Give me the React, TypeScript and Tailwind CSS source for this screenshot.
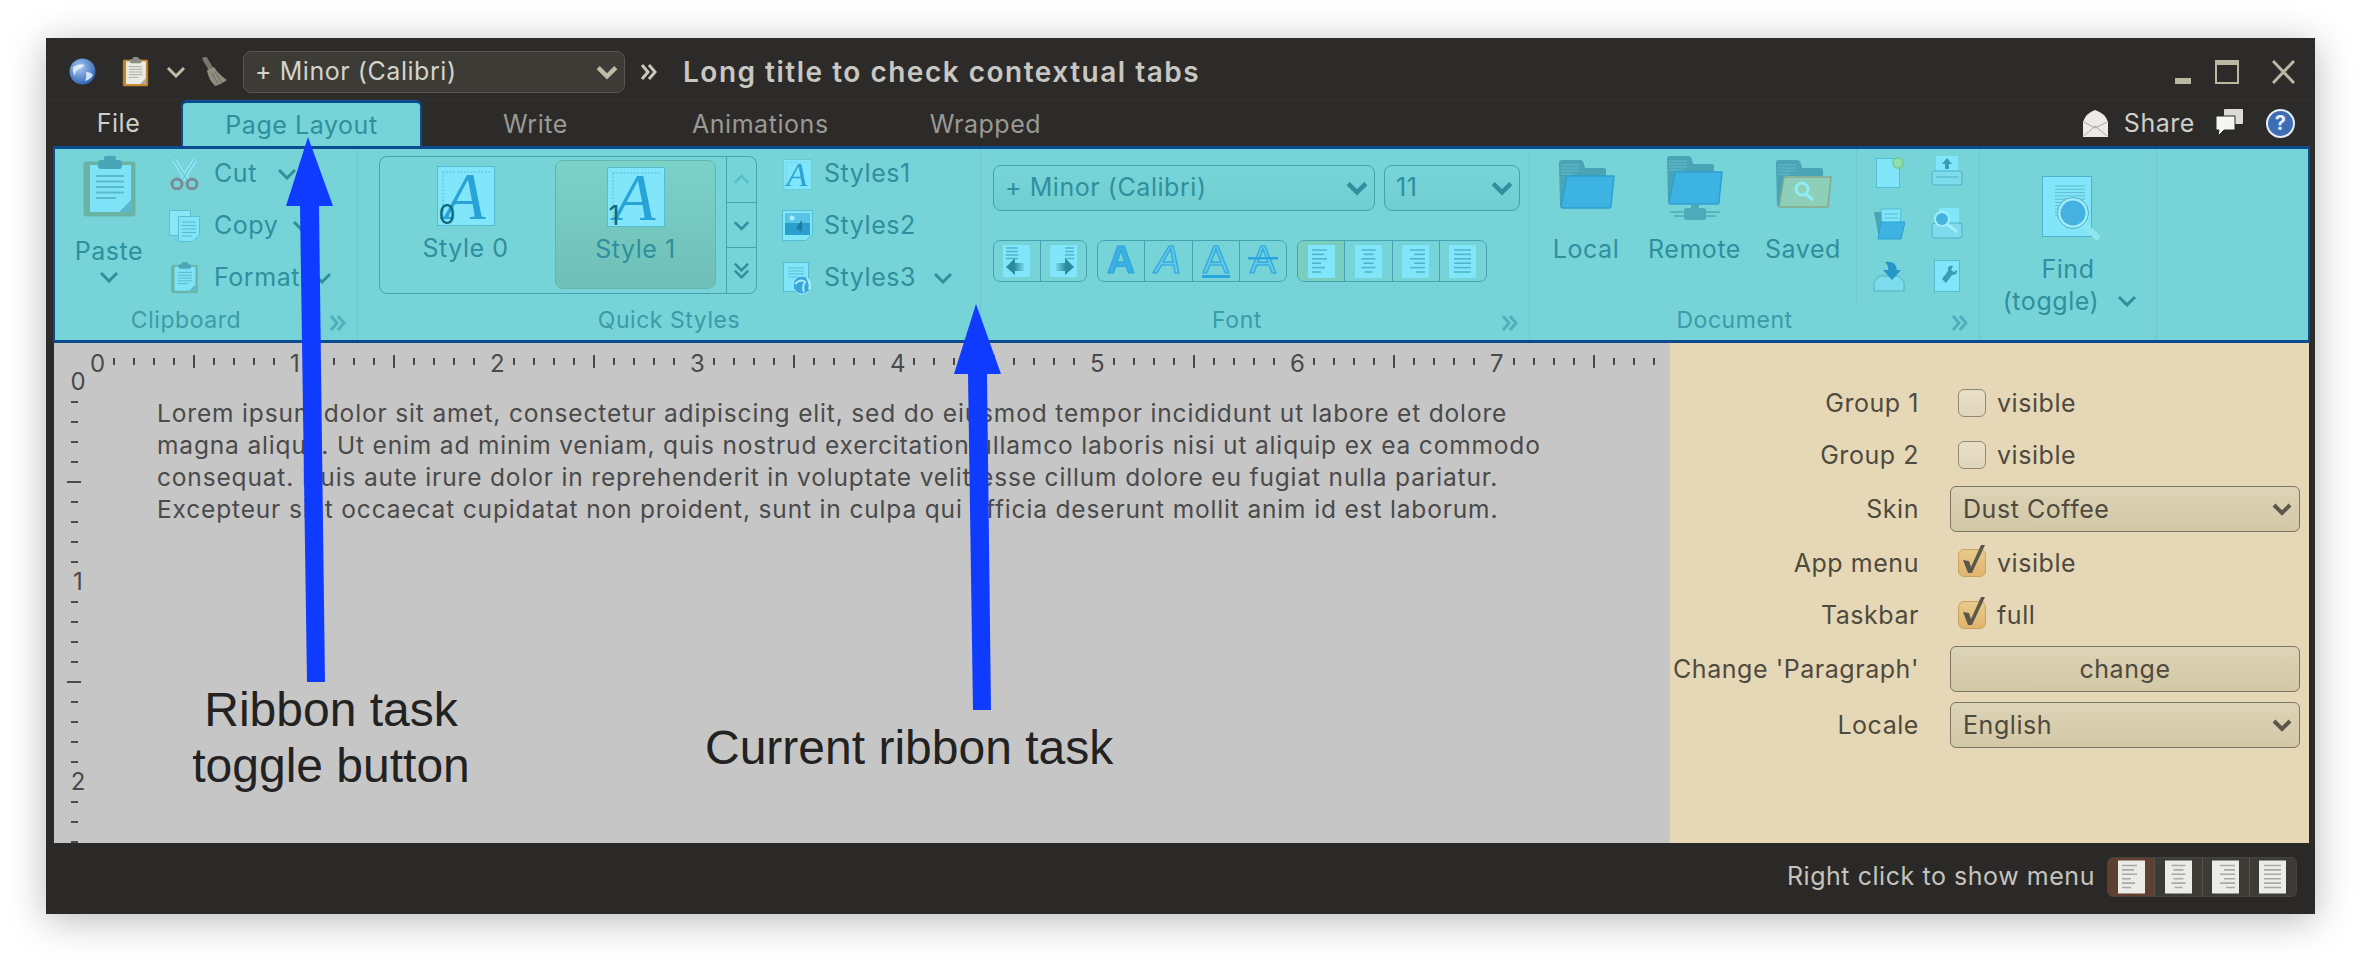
import React from 'react';

const UI = "font-['Inter','Noto_Sans',sans-serif]";
const TEAL = '#2f8f9d';

// ---- small drawings ----
function Chevron({ w = 20, h = 12, color = TEAL, sw = 3 }: { w?: number; h?: number; color?: string; sw?: number }) {
  return (
    <svg width={w} height={h} viewBox="0 0 20 12" className="shrink-0">
      <path d="M2 2 L10 10 L18 2" fill="none" stroke={color} strokeWidth={sw} />
    </svg>
  );
}

function Quote({ color = '#4fb0bb' }: { color?: string }) {
  return (
    <svg width="17" height="18" viewBox="0 0 17 18">
      <path d="M2 2 L8 9 L2 16 M9 2 L15 9 L9 16" fill="none" stroke={color} strokeWidth="3" />
    </svg>
  );
}

function PageLines({ x, y, w, rows, gap = 4, color = '#5cb9cc', sw = 1.5 }: { x: number; y: number; w: number; rows: number; gap?: number; color?: string; sw?: number }) {
  return (
    <>
      {Array.from({ length: rows }).map((_, i) => (
        <line key={i} x1={x} x2={x + w - (i === rows - 1 ? w * 0.3 : 0)} y1={y + i * gap} y2={y + i * gap} stroke={color} strokeWidth={sw} />
      ))}
    </>
  );
}

function Clipboard({ w, h, board, paper, lines, clip }: { w: number; h: number; board: string; paper: string; lines: string; clip: string }) {
  return (
    <svg width={w} height={h} viewBox="0 0 53 62" className="shrink-0">
      <rect x="1" y="6" width="51" height="54" rx="2" fill={board} stroke={board} />
      <rect x="7" y="9" width="41" height="47" fill={paper} />
      <path d="M48 44 L48 56 L36 56 Z" fill={lines} />
      <PageLines x={13} y={20} w={28} rows={5} gap={5.5} color={lines} sw={2} />
      <rect x="15" y="4" width="24" height="9" rx="3" fill={clip} />
      <rect x="21" y="0" width="12" height="6" rx="2" fill={clip} />
    </svg>
  );
}

function Scissors() {
  return (
    <svg width="29" height="31" viewBox="0 0 29 31" className="shrink-0">
      <path d="M4 1 L17 21 M25 1 L12 21" stroke="#8be6f2" strokeWidth="5" fill="none" />
      <path d="M4 1 L17 21 M25 1 L12 21" stroke="#58b7c6" strokeWidth="1" fill="none" />
      <ellipse cx="7" cy="25" rx="5" ry="5" fill="none" stroke="#7a8a96" strokeWidth="3" />
      <ellipse cx="22" cy="25" rx="5" ry="5" fill="none" stroke="#7a8a96" strokeWidth="3" />
    </svg>
  );
}

function Copy() {
  return (
    <svg width="31" height="32" viewBox="0 0 31 32" className="shrink-0">
      <rect x="0.5" y="0.5" width="21" height="25" fill="#8ae5f5" stroke="#5cc0d4" />
      <path d="M9.5 6.5 H30.5 V25 L24 31.5 H9.5 Z" fill="#80e4f8" stroke="#5cc0d4" />
      <PageLines x={13} y={12} w={14} rows={5} gap={3.5} sw={1} />
    </svg>
  );
}

function PageA({ w, h, digit }: { w: number; h: number; digit?: string }) {
  return (
    <div className="relative shrink-0" style={{ width: w, height: h }}>
      <svg width={w} height={h} viewBox="0 0 58 60">
        <rect x="0.5" y="0.5" width="57" height="59" fill="#82e6fa" stroke="#55bdd2" />
        <path d="M6 6 H54 M6 6 V56" stroke="#4cb2c6" strokeWidth="1" strokeDasharray="1.5 2" fill="none" />
        <text x="7" y="53" fontFamily="'Liberation Serif', serif" fontStyle="italic" fontSize="68" fill="#27a3d8">A</text>
      </svg>
      {digit && <span className="absolute left-[2px] bottom-[-4px] text-[27px] leading-[30px] tracking-normal text-[#0a6a7e]">{digit}</span>}
    </div>
  );
}

function Picture() {
  return (
    <svg width="31" height="32" viewBox="0 0 31 32" className="shrink-0">
      <path d="M0.5 0.5 H30.5 V24 L24 30.5 H0.5 Z" fill="#82e6fa" stroke="#55bdd2" />
      <rect x="3" y="3" width="25" height="22" fill="#2b9fcc" />
      <rect x="3" y="3" width="25" height="10" fill="#5ac4e4" />
      <circle cx="10" cy="8" r="2.5" fill="#a8f0ff" />
      <path d="M20 22 L20 10 L14 18 Z" fill="#1e7ca3" />
    </svg>
  );
}

function PageGlobe() {
  return (
    <svg width="29" height="33" viewBox="0 0 29 33" className="shrink-0">
      <rect x="0.5" y="0.5" width="25" height="29" fill="#82e6fa" stroke="#55bdd2" />
      <PageLines x={5} y={6} w={16} rows={4} gap={3} sw={1} />
      <circle cx="19" cy="23" r="9" fill="#3ba6d8" stroke="#9be9f5" />
      <path d="M12 22 Q18 16 22 20 Q19 24 21 30 M24 16 Q28 22 26 27" stroke="#a9eef8" strokeWidth="2" fill="none" />
    </svg>
  );
}

function Folder({ w = 57, h = 50, front = '#3db3e4', edge = '#2f9fd0' }: { w?: number; h?: number; front?: string; edge?: string }) {
  return (
    <svg width={w} height={h} viewBox="0 0 57 50" className="shrink-0">
      <path d="M2 46 L1 3 Q1 0 4 0 H22 Q25 0 26 4 L27 8 H46 Q48 8 48 10 V16 L10 16 L6 46 Z" fill="#49a4b5" />
      <PageLines x={3} y={5} w={18} rows={4} gap={3} color="#66bcca" sw={1} />
      <path d="M9 16 H56 L53 46 Q53 48 51 48 H5 Q3 48 3 46 Z" fill={front} stroke={edge} strokeWidth="1.5" />
    </svg>
  );
}

function RemoteFolder() {
  return (
    <div className="flex flex-col items-center">
      <Folder h={50} />
      <svg width="50" height="16" viewBox="0 0 50 16" className="-mt-[2px]">
        <path d="M0 8 H50 M4 12 H46" stroke="#4ea9b8" strokeWidth="1.5" />
        <rect x="21" y="0" width="8" height="5" fill="#4ea9b8" />
        <rect x="14" y="4" width="22" height="12" rx="2" fill="#4ea9b8" />
      </svg>
    </div>
  );
}

function SavedFolder() {
  return (
    <svg width="57" height="50" viewBox="0 0 57 50" className="shrink-0">
      <path d="M2 46 L1 3 Q1 0 4 0 H22 Q25 0 26 4 L27 8 H46 Q48 8 48 10 V16 L10 16 L6 46 Z" fill="#49a4b5" />
      <PageLines x={3} y={5} w={18} rows={4} gap={3} color="#66bcca" sw={1} />
      <path d="M9 17 H56 L53 47 H4 Z" fill="#8dcfb8" stroke="#86a98b" strokeWidth="1.5" />
      <circle cx="27" cy="29" r="6" fill="none" stroke="#8fecf4" strokeWidth="3" />
      <path d="M31 34 L38 40" stroke="#8fecf4" strokeWidth="3.5" />
    </svg>
  );
}

function FindPage() {
  return (
    <svg width="58" height="64" viewBox="0 0 58 64" className="shrink-0">
      <rect x="0.5" y="0.5" width="49" height="60" fill="#82e6fa" stroke="#4fb2c8" />
      <PageLines x={13} y={10} w={30} rows={10} gap={3.3} color="#5fbdd0" sw={1} />
      <path d="M37 44 L55 61" stroke="#8be6f2" strokeWidth="6" strokeLinecap="round" />
      <circle cx="31" cy="37" r="14" fill="#45b1e0" stroke="#a0eef8" strokeWidth="3" />
      <circle cx="31" cy="37" r="15.5" fill="none" stroke="#53b0c2" strokeWidth="1" />
    </svg>
  );
}

// page with a bar list, aligned left / center / right / justified
function AlignIcon({ kind, w = 27, h = 33, fill = '#82e6fa', line = '#4fb6cc' }: { kind: number; w?: number; h?: number; fill?: string; line?: string }) {
  const widths = [[15, 12, 15, 9, 13, 9], [14, 10, 14, 10, 14, 8], [15, 11, 15, 11, 15, 9], [17, 17, 17, 17, 17, 17]][kind];
  return (
    <svg width={w} height={h} viewBox="0 0 27 33" className="shrink-0">
      <rect x="0" y="0" width="27" height="33" fill={fill} />
      {widths.map((lw, i) => {
        const x = kind === 0 ? 4 : kind === 1 ? (27 - lw) / 2 : kind === 2 ? 23 - lw : 5;
        return <line key={i} x1={x} x2={x + lw} y1={5 + i * 4.4} y2={5 + i * 4.4} stroke={line} strokeWidth="1.6" />;
      })}
    </svg>
  );
}

function IndentIcon({ right }: { right?: boolean }) {
  const id = right ? 'fade-r' : 'fade-l';
  return (
    <svg width="27" height="32" viewBox="0 0 27 32" className="shrink-0">
      <defs>
        <linearGradient id={id} x1={right ? '1' : '0'} x2={right ? '0' : '1'} y1="0" y2="0">
          <stop offset="0.45" stopColor="#2c8a9d" />
          <stop offset="1" stopColor="#2c8a9d" stopOpacity="0.15" />
        </linearGradient>
      </defs>
      <rect x="0" y="0" width="27" height="32" fill="#82e6fa" />
      <path d={right ? 'M15 3 H24 M15 6.5 H24 M15 10 H24 M15 13.5 H24' : 'M3 3 H15 M3 6.5 H15 M3 10 H15 M3 13.5 H15'} stroke="#4fb6cc" strokeWidth="1.5" />
      <path d={right ? 'M6 18 H15 V13 L24 22 L15 30 V26 H6 Z' : 'M21 18 H12 V13 L3 22 L12 30 V26 H21 Z'} fill={`url(#${id})`} />
    </svg>
  );
}

function FontA({ kind }: { kind: number }) {
  const bold = kind === 0;
  return (
    <svg width="36" height="38" viewBox="0 0 36 38" className="shrink-0">
      <text
        x="18"
        y="31"
        textAnchor="middle"
        fontFamily="'Liberation Sans', Arial, sans-serif"
        fontSize="39"
        fontWeight={bold ? 700 : 400}
        fontStyle={kind === 1 ? 'italic' : 'normal'}
        fill={bold ? '#3bb0e2' : '#63cdea'}
        stroke="#2aa6dc"
        strokeWidth={bold ? 1 : 1.2}
      >
        A
      </text>
      {kind === 2 && <rect x="4" y="33" width="28" height="3" fill="#2aa6dc" />}
      {kind === 3 && <rect x="3" y="15" width="30" height="2.5" fill="#2aa6dc" />}
    </svg>
  );
}

function SmallDoc({ kind }: { kind: number }) {
  if (kind === 0) return (
    <svg width="32" height="32" viewBox="0 0 32 32">
      <rect x="3.5" y="2.5" width="23" height="29" fill="#82e6fa" stroke="#55bdd2" />
      <circle cx="25" cy="7" r="5" fill="#8fe0b0" stroke="#78d090" strokeWidth="2" />
    </svg>
  );
  if (kind === 1) return (
    <svg width="32" height="32" viewBox="0 0 32 32">
      <rect x="5" y="0" width="22" height="18" fill="#82e6fa" />
      <path d="M16 2 L21 8 H18 V13 H14 V8 H11 Z" fill="#3b9cb4" />
      <rect x="1" y="15" width="30" height="14" rx="3" fill="#7ddcec" stroke="#4fb0c4" />
      <line x1="5" y1="21" x2="27" y2="21" stroke="#4fb0c4" />
    </svg>
  );
  if (kind === 2) return (
    <svg width="32" height="32" viewBox="0 0 32 32">
      <path d="M1 4 H10 L13 30 H6 Z" fill="#49a4b5" />
      <path d="M8 1 H28 L27 16 H9 Z" fill="#82e6fa" stroke="#55bdd2" />
      <path d="M11 6 H25 M11 10 H25" stroke="#55bdd2" />
      <path d="M8 14 H32 L28 31 H5 Z" fill="#3db3e4" stroke="#2f9fd0" />
    </svg>
  );
  if (kind === 3) return (
    <svg width="32" height="32" viewBox="0 0 32 32">
      <rect x="8" y="0" width="20" height="18" fill="#82e6fa" />
      <rect x="1" y="15" width="30" height="15" rx="3" fill="#7ddcec" stroke="#4fb0c4" />
      <circle cx="11" cy="11" r="7" fill="#45b1e0" stroke="#a0eef8" strokeWidth="2" />
      <path d="M16 16 L26 24" stroke="#a0eef8" strokeWidth="3" />
    </svg>
  );
  if (kind === 4) return (
    <svg width="32" height="32" viewBox="0 0 32 32">
      <path d="M6 16 L1 22 V31 H31 V22 L26 16 Z" fill="#7ddcec" stroke="#4fb0c4" />
      <path d="M12 2 Q23 0 24 10 H28 L19 20 L10 10 H15 Q16 6 12 2 Z" fill="#2796c8" />
    </svg>
  );
  return (
    <svg width="32" height="32" viewBox="0 0 32 32">
      <rect x="3.5" y="0.5" width="25" height="31" fill="#82e6fa" stroke="#55bdd2" />
      <path d="M22 6 Q16 5 17 11 L11 19 L15 23 L21 15 Q27 15 26 10 L23 12 L20 10 Z" fill="#3b9cb4" />
    </svg>
  );
}

function Globe() {
  return (
    <svg width="27" height="27" viewBox="0 0 27 27" className="shrink-0">
      <defs>
        <radialGradient id="gl" cx="0.4" cy="0.35" r="0.7">
          <stop offset="0" stopColor="#a8ccf5" />
          <stop offset="1" stopColor="#2c5fb0" />
        </radialGradient>
      </defs>
      <circle cx="13.5" cy="13.5" r="13" fill="url(#gl)" />
      <path d="M4 9 Q10 5 16 7 Q13 10 10 11 Q6 13 6 18 Q3 14 4 9 Z M17 14 Q22 14 24 17 Q21 22 16 23 Q18 19 17 14 Z" fill="#eaf1fc" opacity="0.85" />
    </svg>
  );
}

function Broom() {
  return (
    <svg width="26" height="30" viewBox="0 0 26 30" className="ml-[16px] shrink-0">
      <path d="M3 2 L9 12" stroke="#77766c" strokeWidth="5" strokeLinecap="round" />
      <path d="M5 13 L12 10 Q17 18 25 23 Q18 28 13 29 Q6 22 5 13 Z" fill="#8e8d7f" />
      <path d="M10 16 L16 27 M13 15 L20 26" stroke="#6f6e62" strokeWidth="1" />
    </svg>
  );
}

// ---- ribbon pieces ----
function RibbonGroup({ width, label, more, labelClass, children }: { width: string; label?: string; more?: boolean; labelClass?: string; children: React.ReactNode }) {
  return (
    <div className={`${width} shrink-0 flex flex-col border-r border-[#6cc8cd]`}>
      <div className="h-[154px] flex">{children}</div>
      {label && (
        <div className="relative flex-1 flex items-center justify-center pb-[2px] text-[23px] text-[#3c9ba7]">
          <span className={labelClass}>{label}</span>
          {more && <span className="absolute right-[11px] top-[11px]"><Quote /></span>}
        </div>
      )}
    </div>
  );
}

function SmallItem({ icon, label, chevron, textClass = 'ml-[14px]' }: { icon: React.ReactNode; label: string; chevron?: string; textClass?: string }) {
  return (
    <div className="h-[52px] flex items-center">
      <div className="w-[32px] flex justify-center shrink-0">{icon}</div>
      <span className={`text-[25px] text-[#2f8f9d] ${textClass}`}>{label}</span>
      {chevron && <span className={chevron}><Chevron /></span>}
    </div>
  );
}

function StyleTile({ digit, active }: { digit: string; active?: boolean }) {
  return (
    <div className={`w-[161px] h-[129px] rounded-[8px] flex flex-col items-center pt-[6px] ${active ? 'bg-gradient-to-b from-[#7bd2c6] to-[#70bfb8] border border-[#63b5ad]' : ''}`}>
      <PageA w={58} h={60} digit={digit} />
      <span className="mt-[5px] text-[25px] leading-[34px] text-[#2f8f9d]">Style {digit}</span>
    </div>
  );
}

function Combo({ text, width, height = 'h-[46px]', dark }: { text: string; width: string; height?: string; dark?: boolean }) {
  return (
    <div className={`${width} ${height} shrink-0 rounded-[8px] border flex items-center justify-between pl-[11px] pr-[6px] text-[25px] ${dark ? 'border-[#57564f] bg-[#3c3b36] text-[#d4d3cb]' : 'border-[#45a3b0] bg-gradient-to-b from-[#78d5d9] to-[#6fcccf] text-[#2f8f9d]'}`}>
      <span>{text}</span>
      <Chevron w={22} h={16} color={dark ? '#bdbca4' : '#2f8f9d'} sw={4} />
    </div>
  );
}

function Strip({ children, width }: { children: React.ReactNode; width: string }) {
  return <div className={`${width} h-[42px] shrink-0 flex rounded-[7px] border border-[#45a3b0] overflow-hidden divide-x divide-[#45a3b0]`}>{children}</div>;
}

function StripCell({ children, active }: { children: React.ReactNode; active?: boolean }) {
  return <div className={`flex-1 flex items-center justify-center overflow-hidden ${active ? 'bg-[#78cfc0]' : ''}`}>{children}</div>;
}

function Ribbon() {
  const doc = [0, 1, 2, 3, 4, 5];
  return (
    <div className="ml-[7px] mr-[5px] h-[197px] border-y-[3px] border-x-[2px] border-[#0a4a8f] bg-[#76d4d9] flex shrink-0">
      <RibbonGroup width="w-[303px]" label="Clipboard" more labelClass="mr-[40px]">
        <div className="w-[108px] mr-[2px] pt-[7px] flex flex-col items-center shrink-0">
          <Clipboard w={53} h={62} board="#6bb3a3" paper="#7fe3f7" lines="#5cb9cc" clip="#49a6b6" />
          <span className="mt-[18px] text-[25px] leading-[30px] text-[#2f8f9d]">Paste</span>
          <span className="mt-[5px]"><Chevron /></span>
        </div>
        <div className="-mt-[1px] pl-[3px]">
          <SmallItem icon={<Scissors />} label="Cut" chevron="ml-[20px]" />
          <SmallItem icon={<Copy />} label="Copy" chevron="ml-[14px]" />
          <SmallItem icon={<Clipboard w={27} h={32} board="#6bb3a3" paper="#7fe3f7" lines="#5cb9cc" clip="#49a6b6" />} label="Format" chevron="ml-[12px]" />
        </div>
      </RibbonGroup>

      <RibbonGroup width="w-[623px]" label="Quick Styles">
        <div className="ml-[21px] mt-[7px] w-[378px] h-[138px] shrink-0 rounded-[8px] border border-[#45a3b0] flex">
          <div className="flex-1 flex pt-[3px] justify-end pr-[10px] gap-[9px]">
            <StyleTile digit="0" />
            <StyleTile digit="1" active />
          </div>
          <div className="w-[30px] border-l border-[#45a3b0] flex flex-col divide-y divide-[#45a3b0]">
            <div className="flex-1 flex items-center justify-center"><span className="rotate-180"><Chevron w={17} h={11} color="#55c0c6" /></span></div>
            <div className="flex-1 flex items-center justify-center"><Chevron w={17} h={11} /></div>
            <div className="flex-1 flex flex-col items-center justify-center -space-y-[3px]"><Chevron w={17} h={10} /><Chevron w={17} h={10} /></div>
          </div>
        </div>
        <div className="pl-[24px] -mt-[1px]">
          <SmallItem icon={<PageA w={29} h={31} />} label="Styles1" textClass="ml-[11px]" />
          <SmallItem icon={<Picture />} label="Styles2" textClass="ml-[11px]" />
          <SmallItem icon={<PageGlobe />} label="Styles3" textClass="ml-[11px]" chevron="ml-[17px]" />
        </div>
      </RibbonGroup>

      <RibbonGroup width="w-[549px]" label="Font" more labelClass="mr-[36px]">
        <div className="pl-[12px] pt-[16px] flex flex-col gap-[29px]">
          <div className="flex gap-[9px]">
            <Combo text="+ Minor (Calibri)" width="w-[382px]" />
            <Combo text="11" width="w-[136px]" />
          </div>
          <div className="flex gap-[10px]">
            <Strip width="w-[94px]">
              <StripCell><IndentIcon /></StripCell>
              <StripCell><IndentIcon right /></StripCell>
            </Strip>
            <Strip width="w-[190px]">
              {[0, 1, 2, 3].map((k) => <StripCell key={k}><FontA kind={k} /></StripCell>)}
            </Strip>
            <Strip width="w-[190px]">
              {[0, 1, 2, 3].map((k) => <StripCell key={k} active={k === 0}><AlignIcon kind={k} /></StripCell>)}
            </Strip>
          </div>
        </div>
      </RibbonGroup>

      <RibbonGroup width="w-[450px]" label="Document" more labelClass="mr-[40px]">
        <div className="w-[327px] shrink-0 pt-[7px] flex justify-between pl-[16px] pr-[13px] border-r border-[#6cc8cd]">
          {[
            { label: 'Local', icon: <div className="pt-[4px]"><Folder /></div> },
            { label: 'Remote', icon: <RemoteFolder /> },
            { label: 'Saved', icon: <div className="pt-[4px]"><SavedFolder /></div> },
          ].map((item) => (
            <div key={item.label} className="w-[80px] flex flex-col items-center">
              <div className="h-[66px]">{item.icon}</div>
              <span className="mt-[10px] text-[25px] leading-[34px] text-[#2f8f9d] whitespace-nowrap">{item.label}</span>
            </div>
          ))}
        </div>
        <div className="pl-[16px] pt-[7px] grid grid-cols-[58px_32px] grid-rows-[52px_52px_52px]">
          {doc.map((k) => <SmallDoc key={k} kind={k} />)}
        </div>
      </RibbonGroup>

      <div className="w-[177px] shrink-0 border-r border-[#6cc8cd] flex flex-col items-center pt-[27px]">
        <span className="ml-[6px]"><FindPage /></span>
        <span className="mt-[13px] text-[25px] leading-[32px] text-[#2f8f9d]">Find</span>
        <span className="flex items-center gap-[18px] text-[25px] leading-[32px] text-[#2f8f9d] ml-[4px]">(toggle)<Chevron /></span>
      </div>
      <div className="flex-1" />
    </div>
  );
}

// ---- rulers ----
function HRuler() {
  const cells = Array.from({ length: 79 });
  return (
    <div className="h-[29px] flex pl-[39px] items-start shrink-0 overflow-hidden">
      {cells.map((_, i) => (
        <div key={i} className="w-[20px] h-[29px] shrink-0 flex justify-start items-start">
          {i % 10 === 0 ? (
            <span className="-ml-[3px] text-[24px] leading-[29px] pt-[6px] tracking-normal text-[#4a4a4a]">{i / 10}</span>
          ) : i % 5 === 0 ? (
            <span className="mt-[12px] w-[2px] h-[13px] bg-[#4a4a4a]" />
          ) : (
            <span className="mt-[15px] w-[2px] h-[7px] bg-[#4a4a4a]" />
          )}
        </div>
      ))}
    </div>
  );
}

function VRuler() {
  const cells = Array.from({ length: 24 });
  return (
    <div className="w-[40px] shrink-0 flex flex-col items-center overflow-hidden">
      {cells.map((_, i) => (
        <div key={i} className="h-[20px] w-full shrink-0 flex justify-center items-center">
          {i % 10 === 0 ? (
            <span className="ml-[8px] text-[24px] leading-[20px] tracking-normal text-[#4a4a4a]">{i / 10}</span>
          ) : i % 5 === 0 ? (
            <span className="w-[14px] h-[2px] bg-[#4a4a4a]" />
          ) : (
            <span className="w-[7px] h-[2px] bg-[#4a4a4a]" />
          )}
        </div>
      ))}
    </div>
  );
}

// ---- side panel ----
function Row({ label, children, height = 'h-[52px]' }: { label: string; children: React.ReactNode; height?: string }) {
  return (
    <div className={`${height} flex items-center`}>
      <span className="w-[249px] text-right text-[25px] shrink-0 whitespace-nowrap">{label}</span>
      <div className="ml-[31px] flex-1 flex items-center">{children}</div>
    </div>
  );
}

function Check({ checked, label }: { checked?: boolean; label: string }) {
  return (
    <div className="flex items-center ml-[8px]">
      <span className={`relative w-[28px] h-[28px] rounded-[6px] border ${checked ? 'border-[#c9a25f] bg-gradient-to-b from-[#e8cb8a] to-[#e0b46d]' : 'border-[#8f8a78] bg-gradient-to-b from-[#e8dfc6] to-[#dfd6bc]'}`}>
        {checked && (
          <svg width="28" height="34" viewBox="0 0 28 34" className="absolute left-[-1px] top-[-7px]">
            <path d="M5 17 L11 18 L13 24 L23 2 L27 2 L14 30 L10 30 Z" fill="#5a574c" />
          </svg>
        )}
      </span>
      <span className="ml-[11px] text-[25px]">{label}</span>
    </div>
  );
}

function PanelCombo({ text }: { text: string }) {
  return (
    <div className="w-[350px] h-[46px] rounded-[6px] border border-[#7b7666] bg-gradient-to-b from-[#ddd3b6] to-[#d3c8a6] flex items-center justify-between pl-[12px] pr-[7px] text-[25px]">
      <span>{text}</span>
      <Chevron w={20} h={14} color="#5a574c" sw={4} />
    </div>
  );
}

function SidePanel() {
  return (
    <div className="w-[639px] shrink-0 bg-[#e6d8b6] text-[#4e4a3e] pt-[34px] leading-none">
      <Row label="Group 1"><Check label="visible" /></Row>
      <Row label="Group 2"><Check label="visible" /></Row>
      <Row label="Skin" height="h-[56px]"><PanelCombo text="Dust Coffee" /></Row>
      <Row label="App menu"><Check checked label="visible" /></Row>
      <Row label="Taskbar"><Check checked label="full" /></Row>
      <Row label="Change 'Paragraph'" height="h-[56px]">
        <div className="w-[350px] h-[46px] rounded-[6px] border border-[#7b7666] bg-gradient-to-b from-[#ddd3b6] to-[#d3c8a6] flex items-center justify-center text-[25px]">change</div>
      </Row>
      <Row label="Locale" height="h-[56px]"><PanelCombo text="English" /></Row>
    </div>
  );
}

// ---- annotation arrows (drawn over the window) ----
function Arrow({ className, width, height, d }: { className: string; width: number; height: number; d: string }) {
  return (
    <svg width={width} height={height} viewBox={`0 0 ${width} ${height}`} className={`absolute ${className}`}>
      <path d={d} fill="#0f3bff" />
    </svg>
  );
}

export default function App() {
  return (
    <div className={`relative w-[2362px] h-[968px] bg-white overflow-hidden tracking-[0.55px] ${UI}`}>
      <div className="ml-[46px] pt-[38px]">
        <div className="w-[2269px] h-[876px] bg-[#2c2b29] flex flex-col shadow-[0_6px_36px_rgba(0,0,0,0.28)]">
          {/* title bar */}
          <div className="h-[62px] flex items-center shrink-0 border-b border-[#333230] pl-[23px] pt-[6px]">
            <Globe />
            <span className="ml-[26px]"><Clipboard w={27} h={30} board="#c5862e" paper="#ebebe6" lines="#a9a9a4" clip="#8d8c84" /></span>
            <span className="ml-[17px]"><Chevron color="#bdbca4" sw={3} /></span>
            <Broom />
            <div className="ml-[15px]"><Combo text="+ Minor (Calibri)" width="w-[382px]" height="h-[42px]" dark /></div>
            <span className="ml-[15px]"><Quote color="#c9c8b4" /></span>
            <span className="ml-[26px] text-[28px] tracking-[1.5px] font-semibold text-[#c8c7c2] whitespace-nowrap">Long title to check contextual tabs</span>
            <div className="ml-auto flex items-end pr-[20px] gap-[24px]">
              <span className="w-[16px] h-[6px] bg-[#bab8a0]" />
              <span className="w-[24px] h-[24px] border-2 border-t-[5px] border-[#bab8a0]" />
              <svg width="23" height="24" viewBox="0 0 23 24" className="ml-[9px]"><path d="M1 1 L22 23 M22 1 L1 23" stroke="#bab8a0" strokeWidth="3" /></svg>
            </div>
          </div>

          {/* task tabs */}
          <div className="h-[46px] flex items-end shrink-0 text-[25px] leading-none relative">
            <div className="w-[135px] h-[46px] flex items-center justify-center text-[#cfcec9]"><span className="pl-[10px]">File</span></div>
            <div className="w-[241px] h-[46px] rounded-t-[6px] border-x-[2px] border-t-[3px] border-[#0a4a8f] bg-[#76d4d9] flex items-center justify-center text-[#2f8f9d] pt-[2px]">Page Layout</div>
            <span className="ml-[81px] self-center pt-[2px] text-[#9a9994]">Write</span>
            <span className="ml-[124px] self-center pt-[2px] text-[#9a9994]">Animations</span>
            <span className="ml-[101px] self-center pt-[2px] text-[#9a9994]">Wrapped</span>
            <div className="ml-auto self-center flex items-center pr-[20px]">
              <svg width="25" height="27" viewBox="0 0 25 27"><path d="M0 12 Q3 3 12 0 Q22 3 25 12 V27 H0 Z" fill="#ecebe6" /><path d="M1 26 L12 16 L24 26 M1 12 L12 18 L24 12" fill="none" stroke="#a7a6a0" strokeWidth="1" /></svg>
              <span className="ml-[16px] text-[#cfcec9]">Share</span>
              <svg width="28" height="28" viewBox="0 0 28 28" className="ml-[20px]">
                <rect x="9" y="0" width="19" height="15" rx="1" fill="#dcdbd6" />
                <path d="M1 7 H20 V21 H9 L3 27 L4 21 H1 Z" fill="#f5f5f2" stroke="#2c2b29" />
              </svg>
              <span className="ml-[23px] w-[29px] h-[29px] rounded-full bg-[#3f6db5] border-[2px] border-[#e8eef8] flex items-center justify-center text-[20px] font-bold text-[#e8eef8]">?</span>
            </div>
          </div>

          <Ribbon />

          {/* main area */}
          <div className="ml-[8px] mr-[6px] flex-1 flex min-h-0">
            <div className="flex-1 bg-[#c6c6c6] min-w-0 overflow-hidden flex flex-col">
              <HRuler />
              <div className="flex flex-1 min-h-0 overflow-hidden">
                <VRuler />
                <p className="ml-[63px] pt-[25px] text-[24.5px] leading-[32px] tracking-[0.84px] text-[#4a4a4a] whitespace-nowrap">
                  Lorem ipsum dolor sit amet, consectetur adipiscing elit, sed do eiusmod tempor incididunt ut labore et dolore<br />
                  magna aliqua. Ut enim ad minim veniam, quis nostrud exercitation ullamco laboris nisi ut aliquip ex ea commodo<br />
                  consequat. Duis aute irure dolor in reprehenderit in voluptate velit esse cillum dolore eu fugiat nulla pariatur.<br />
                  Excepteur sint occaecat cupidatat non proident, sunt in culpa qui officia deserunt mollit anim id est laborum.
                </p>
              </div>
            </div>
            <SidePanel />
          </div>

          {/* status bar */}
          <div className="h-[71px] shrink-0 bg-[#2a2927] flex items-center justify-end pr-[18px] pb-[4px]">
            <span className="text-[25px] text-[#c4c3be] mr-[12px]">Right click to show menu</span>
            <div className="w-[190px] h-[40px] flex rounded-[6px] border border-[#45443f] overflow-hidden divide-x divide-[#55544e] bg-[#3c3b36]">
              {[0, 1, 2, 3].map((k) => (
                <div key={k} className={`flex-1 flex items-center justify-center ${k === 0 ? 'bg-[#5f3f2f]' : ''}`}>
                  <AlignIcon kind={k} h={34} fill="#ebebe8" line="#a8a8a4" />
                </div>
              ))}
            </div>
          </div>
        </div>
      </div>

      {/* annotations */}
      <Arrow className="left-[286px] top-[137px]" width={47} height={545} d="M22 0 L47 69 H33 L39 545 H21 L14 69 H0 Z" />
      <Arrow className="left-[954px] top-[304px]" width={47} height={406} d="M22 0 L47 70 H33 L37 406 H19 L14 70 H0 Z" />
      <div className="absolute left-[151px] top-[682px] w-[360px] text-center tracking-normal font-['Liberation_Sans',Arial,sans-serif] text-[48px] leading-[56px] text-[#222]">Ribbon task<br />toggle button</div>
      <div className="absolute left-[705px] top-[720px] tracking-normal font-['Liberation_Sans',Arial,sans-serif] text-[48px] leading-[56px] text-[#222] whitespace-nowrap">Current ribbon task</div>
    </div>
  );
}
